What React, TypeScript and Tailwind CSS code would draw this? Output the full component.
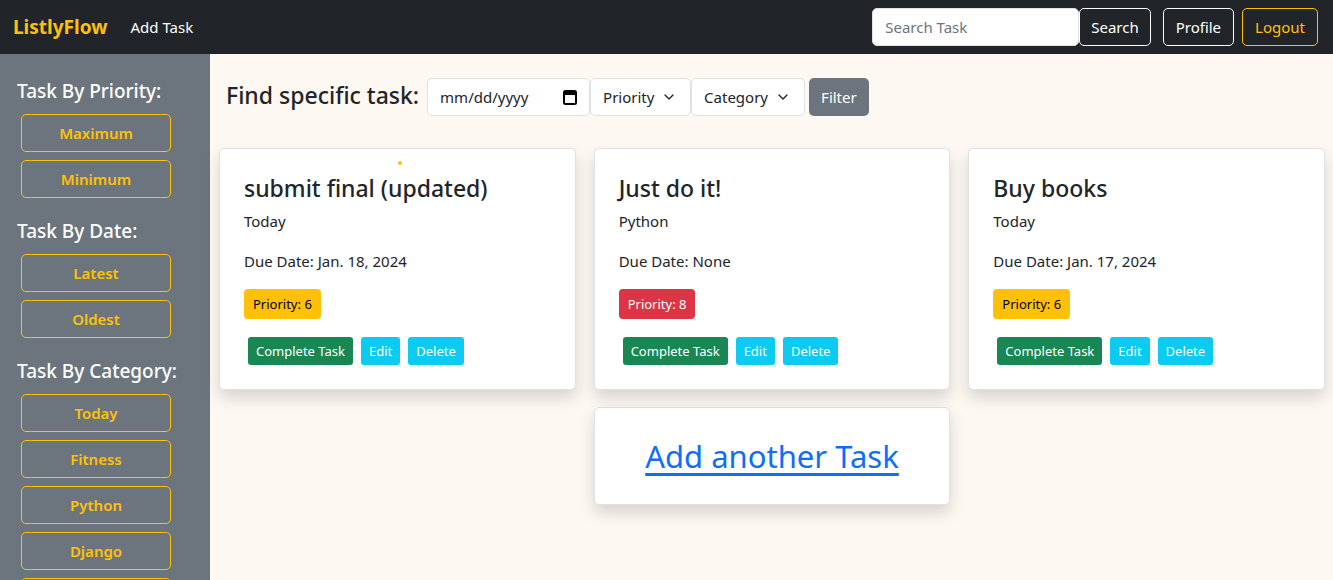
import { ChevronDown } from "lucide-react";

const FONT = { fontFamily: '"Noto Sans", "Open Sans", sans-serif' };

interface ITask {
  title: string;
  category: string;
  due: string;
  priority: number;
  hot?: boolean;
  dot?: boolean;
}

const tasks: ITask[] = [
  { title: "submit final (updated)", category: "Today", due: "Jan. 18, 2024", priority: 6, dot: true },
  { title: "Just do it!", category: "Python", due: "None", priority: 8, hot: true },
  { title: "Buy books", category: "Today", due: "Jan. 17, 2024", priority: 6 },
];

const groups = [
  { label: "Task By Priority:", items: ["Maximum", "Minimum"] },
  { label: "Task By Date:", items: ["Latest", "Oldest"] },
  { label: "Task By Category:", items: ["Today", "Fitness", "Python", "Django", "Work"] },
];

function TaskCard({ task }: { task: ITask }) {
  return (
    <div className="relative rounded-[5px] border border-[#dee2e6] bg-white px-6 pt-[22px] pb-6 shadow-[0_8px_16px_rgba(0,0,0,0.15)]">
      {task.dot && (
        <span className="absolute left-[178px] top-[12px] h-1 w-1 rounded-full bg-[#ffc107]" />
      )}
      <h3 className="text-[23px] leading-[34px] font-medium text-[#212529]">{task.title}</h3>
      <p className="mt-[4px] text-[15px] leading-[24px] text-[#212529]">{task.category}</p>
      <p className="mt-4 text-[15px] leading-[24px] text-[#212529]">Due Date: {task.due}</p>
      <span
        className={
          task.hot
            ? "mt-[16px] inline-block rounded-[4px] bg-[#dc3545] px-[9px] py-[5px] text-[13px] leading-[20px] text-white"
            : "mt-[16px] inline-block rounded-[4px] bg-[#ffc107] px-[9px] py-[5px] text-[13px] leading-[20px] text-black"
        }
      >
        Priority: {task.priority}
      </span>
      <div className="mt-[18px] ml-1 flex gap-2">
        <button className="rounded-[3px] bg-[#198754] px-2 py-[3px] text-[13px] leading-[22px] text-white">
          Complete Task
        </button>
        <button className="rounded-[3px] bg-[#0dcaf0] px-2 py-[3px] text-[13px] leading-[22px] text-white">
          Edit
        </button>
        <button className="rounded-[3px] bg-[#0dcaf0] px-2 py-[3px] text-[13px] leading-[22px] text-white">
          Delete
        </button>
      </div>
    </div>
  );
}

export default function App() {
  return (
    <div className="flex h-[580px] flex-col overflow-hidden" style={FONT}>
      <nav className="flex h-[54px] shrink-0 items-center bg-[#212529] pr-[15px] pl-[13px]">
        <span className="text-[19px] font-bold text-[#ffc107]">ListlyFlow</span>
        <span className="ml-[23px] text-[15px] text-white">Add Task</span>
        <div className="ml-auto flex items-center">
          <input
            placeholder="Search Task"
            className="h-[38px] w-[207px] rounded-[5px] border border-[#dee2e6] bg-white px-3 text-[15px] text-[#212529] placeholder:text-[#6c757d] outline-none"
          />
          <button className="h-[38px] rounded-[5px] border border-white px-[11px] text-[15px] text-white">
            Search
          </button>
          <button className="ml-3 h-[38px] rounded-[5px] border border-white px-3 text-[15px] text-white">
            Profile
          </button>
          <button className="ml-2 h-[38px] rounded-[5px] border border-[#ffc107] px-3 text-[15px] text-[#ffc107]">
            Logout
          </button>
        </div>
      </nav>
      <div className="flex min-h-0 flex-1">
        <aside className="w-[210px] shrink-0 bg-[#6c757d] pt-[22px] pl-[17px]">
          {groups.map((g) => (
            <div key={g.label} className="mb-[18px]">
              <h5 className="text-[19px] leading-[30px] font-medium text-white">{g.label}</h5>
              <div className="mt-[8px] flex flex-col gap-2 pl-1">
                {g.items.map((it) => (
                  <button
                    key={it}
                    className="h-[38px] w-[150px] rounded-[5px] border border-[#ffc107] text-[15px] font-semibold text-[#ffc107]"
                  >
                    {it}
                  </button>
                ))}
              </div>
            </div>
          ))}
        </aside>
        <main className="flex-1 bg-[#fef8f2] pt-6 pr-2 pl-[9px]">
          <div className="flex items-center pl-[7px]">
            <h2 className="mr-2 -mt-1 text-[23px] font-medium text-[#212529]">Find specific task:</h2>
            <div className="flex h-[38px] w-[163px] items-center justify-between rounded-[5px] border border-[#dee2e6] bg-white px-3 text-[15px] text-[#212529]">
              <span>mm/dd/yyyy</span>
              <svg width="14" height="16" viewBox="0 0 14 16">
                <rect x="1" y="2" width="12" height="13" rx="1.5" fill="none" stroke="#000" strokeWidth="2" />
                <rect x="1" y="2" width="12" height="4" fill="#000" />
              </svg>
            </div>
            <div className="flex h-[38px] w-[101px] items-center justify-between rounded-[5px] border border-[#dee2e6] bg-white pr-[13px] pl-3 text-[15px] text-[#212529]">
              <span>Priority</span>
              <ChevronDown size={16} strokeWidth={2} />
            </div>
            <div className="flex h-[38px] w-[114px] items-center justify-between rounded-[5px] border border-[#dee2e6] bg-white pr-[13px] pl-3 text-[15px] text-[#212529]">
              <span>Category</span>
              <ChevronDown size={16} strokeWidth={2} />
            </div>
            <button className="ml-[4px] h-[38px] rounded-[5px] bg-[#6c757d] px-3 text-[15px] text-white">
              Filter
            </button>
          </div>
          <div className="mt-[32px] grid grid-cols-3 gap-x-[18px] gap-y-[17px]">
            {tasks.map((t) => (
              <TaskCard key={t.title} task={t} />
            ))}
            <div className="col-start-2 flex h-[98px] items-center justify-center rounded-[5px] border border-[#dee2e6] bg-white shadow-[0_8px_16px_rgba(0,0,0,0.15)]">
              <a href="#" className="text-[31px] text-[#0d6efd] underline underline-offset-[5px]">
                Add another Task
              </a>
            </div>
          </div>
        </main>
      </div>
    </div>
  );
}
